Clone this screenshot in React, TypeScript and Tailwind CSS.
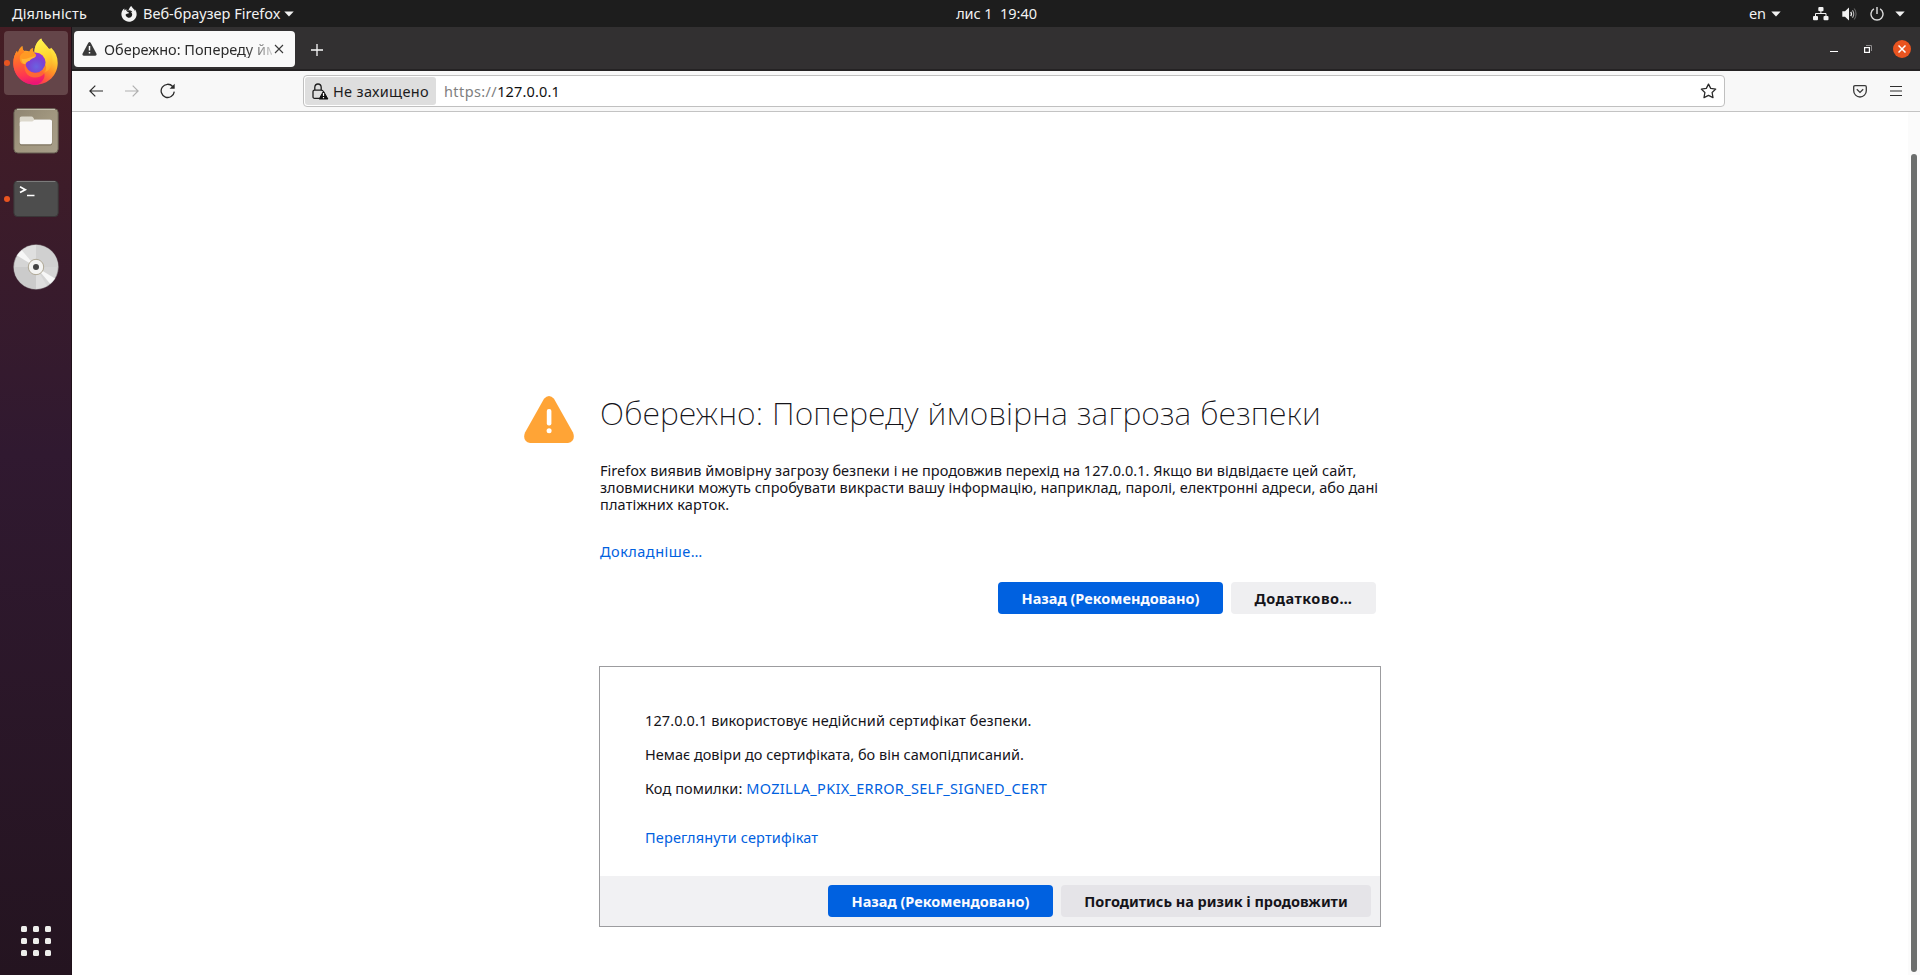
import React from "react";
import { FaFirefoxBrowser } from "react-icons/fa";

function FirefoxLogo() {
  return (
    <svg width="46" height="47" viewBox="0 0 46 47" className="block">
      <defs>
        <linearGradient id="ffBody" x1="0.85" y1="0.1" x2="0.3" y2="1">
          <stop offset="0" stopColor="#fff04a" />
          <stop offset="0.25" stopColor="#ffd032" />
          <stop offset="0.5" stopColor="#ff9226" />
          <stop offset="0.75" stopColor="#ff4a45" />
          <stop offset="1" stopColor="#e8157a" />
        </linearGradient>
        <linearGradient id="ffLeft" x1="0.3" y1="0" x2="0.45" y2="1">
          <stop offset="0" stopColor="#ff9a1c" />
          <stop offset="0.4" stopColor="#ff6530" />
          <stop offset="0.75" stopColor="#ff3750" />
          <stop offset="1" stopColor="#ea1478" />
        </linearGradient>
        <linearGradient id="ffFlame" x1="0.4" y1="0" x2="0.6" y2="1">
          <stop offset="0" stopColor="#fff44f" />
          <stop offset="0.55" stopColor="#ffd431" />
          <stop offset="1" stopColor="#ffa22a" />
        </linearGradient>
        <radialGradient id="ffGlobe" cx="0.55" cy="0.7" r="0.75">
          <stop offset="0" stopColor="#6a63e0" />
          <stop offset="0.5" stopColor="#7a44d4" />
          <stop offset="1" stopColor="#a72bd0" />
        </radialGradient>
      </defs>
      <path d="M28.2 .6C29 4 33 6.500 35.500 10.500C37 11 37.800 10.500 38.200 9.800C42.500 13.800 44.700 19 44.700 25C44.700 37 35 46.800 22.500 46.800C10 46.800 .3 37.500 .3 25C.3 20.500 1.600 16.500 4 12.800C4.300 14.200 4.600 14.700 5 15C5.600 12 7 9.800 9.300 8C9.400 10.300 9.900 12 11 13C13 12.600 15 12.900 16.400 13.700C17 12 18 10.800 19.800 10C19.400 12.300 20 14 21.500 15.200C21.300 9 23.500 4 28.200 .6Z" fill="url(#ffBody)" />
      <path d="M.3 25C.3 20.500 1.600 16.500 4 12.800C4.300 14.200 4.600 14.700 5 15C5.600 12 7 9.800 9.300 8C9.400 10.300 9.900 12 11 13L13 24C12 34 22 37 30 33C34 38 30 44 24 46.800C10 47 .3 37.500 .3 25Z" fill="url(#ffLeft)" />
      <path d="M28.200 .6C29 4 33 6.500 35.500 10.500C39 15 40.500 21 38.500 27C37 31.500 34 34 30.500 34.500C33.500 30 33.500 23 30.500 18.500C28.500 15.500 24.500 14.500 21.500 15.200C21.300 9 23.500 4 28.200 .6Z" fill="url(#ffFlame)" />
      <circle cx="22.300" cy="24.600" r="10.200" fill="url(#ffGlobe)" />
      <path d="M7 18C8.500 14.500 13 12.800 16.400 13.700C17 12 18 10.800 19.800 10C19.400 12.300 20 14 22.500 16C23.600 17 23.300 18.800 21 19.600C18 20.500 17.500 21.500 16.500 22.700C14 23.200 13 24.500 12.600 26.200C8 27 6 22 7 18Z" fill="#ff9a24" />
      <path d="M8.500 20.500C12 22.500 17 18.500 22.800 18.200C22.300 20 18.200 20 16.500 22.700C14 23.200 13 24.500 12.600 26.200C10 26 8.500 23.500 8.500 20.500Z" fill="#ffb636" />
      <path d="M12.300 24C12.300 32 18 35.500 24 35C29 34.500 32 31 32.500 27C35 33 30 39.500 22 39.500C14 39.500 9.500 32 12.300 24Z" fill="#ff7a2a" opacity=".75" />
    </svg>
  );
}

function FilesIcon() {
  return (
    <svg width="46" height="46" viewBox="0 0 46 46" className="block">
      <defs>
        <linearGradient id="filesBg" x1="0" y1="0" x2="1" y2="1">
          <stop offset="0" stopColor="#8e8471" />
          <stop offset="0.5" stopColor="#a1977f" />
          <stop offset="1" stopColor="#a69d89" />
        </linearGradient>
      </defs>
      <rect x=".9" y=".7" width="44.300" height="44.300" rx="4" fill="url(#filesBg)" stroke="#645d50" />
      <path d="M4 1.400H42" stroke="#c9c3b4" />
      <path d="M6.700 14C6.700 12.500 7.300 11.600 8.700 11.600H37C38.500 11.600 39.200 12.500 39.200 14V35.500C39.200 37 38 37.600 36.700 37.600H8.700C7.300 37.600 6.700 37 6.700 35.500Z" fill="#7c735f" />
      <path d="M6.700 18V10.600C6.700 9.200 7.300 8.400 8.700 8.400H18.500C20 8.400 20.500 10 21.500 11.500V18Z" fill="#dcd8cc" />
      <path d="M6.700 15.500C6.700 14.200 7.200 13.500 8.500 13.500H19C20.300 13.500 20.800 11.400 22.300 11.400H36.800C38.400 11.400 39 12.200 39 13.600V34C39 35.600 38.200 36.300 36.800 36.300H8.900C7.400 36.300 6.700 35.500 6.700 34Z" fill="#faf9f8" />
    </svg>
  );
}

function TerminalIcon() {
  return (
    <svg width="46" height="38" viewBox="0 0 46 38" className="block">
      <rect x=".9" y="1" width="44.300" height="35.500" rx="3.500" fill="#4d4d4d" stroke="#3a3738" />
      <path d="M3.500 1.500H42.500" stroke="#8a8a8a" strokeWidth=".8" />
      <path d="M7 6.800L12.300 9.700L7 12.600" fill="none" stroke="#fff" strokeWidth="1.700" />
      <path d="M14 15.500H21.500" stroke="#fff" strokeWidth="1.500" />
    </svg>
  );
}

function DiscIcon() {
  return (
    <svg width="46" height="46" viewBox="0 0 46 46" className="block">
      <circle cx="23" cy="23" r="22.300" fill="#d5d5d5" stroke="#8d898b" strokeWidth=".6" />
      <path d="M23 23L23 1A22 22 0 0 0 8 7Z" fill="#dfdfdf" />
      <path d="M23 23L45 23A22 22 0 0 0 23 1Z" fill="#d0d0d0" />
      <path d="M23 23L1 23A22 22 0 0 0 23 45Z" fill="#cbcbcb" />
      <path d="M23 23L23 45A22 22 0 0 0 34 42Z" fill="#dedede" />
      <path d="M23 23L4 11.600A22 22 0 0 1 8.800 6.300Z" fill="#f7f7f7" />
      <path d="M23 23L42 34.400A22 22 0 0 1 37.200 39.700Z" fill="#f7f7f7" />
      <circle cx="23" cy="23" r="7.700" fill="#f4f4f2" stroke="#a8a08c" strokeWidth=".9" />
      <circle cx="23" cy="23" r="3" fill="#444" />
    </svg>
  );
}

function DockItem({ children, active = false, running = false }: { children: React.ReactNode; active?: boolean; running?: boolean }) {
  return (
    <div className={`relative ml-1 flex h-16 w-16 items-center justify-center rounded ${active ? "bg-[#644549]" : ""}`}>
      {running && <span className="absolute top-[29px] left-0 h-[6px] w-[6px] rounded-full bg-[#e95420]" />}
      {children}
    </div>
  );
}

function Caret({ className = "" }: { className?: string }) {
  return (
    <svg width="10" height="6" viewBox="0 0 10 6" className={`block ${className}`}>
      <path d="M.3.400H9.700L5 5.500Z" fill="#f2f2f2" />
    </svg>
  );
}

function TopBar() {
  return (
    <div className="flex h-[27px] items-center bg-[#1d1d1d] text-[#f2f2f2]">
      <div className="flex flex-1 items-center pl-3">
        <span className="w-[109px] tracking-[0.15px]">Діяльність</span>
        <FaFirefoxBrowser className="mr-[6px] h-4 w-4 text-[#f2f2f2]" />
        <span>Веб-браузер Firefox</span>
        <Caret className="ml-1" />
      </div>
      <div className="ml-[76px] tracking-[-0.05px] whitespace-pre">лис 1  19:40</div>
      <div className="flex flex-1 items-center justify-end pr-[15px]">
        <span>en</span>
        <Caret className="ml-[5px]" />
        <svg width="16" height="14" viewBox="0 0 16 14" className="ml-[32px] block">
          <g fill="#f2f2f2">
            <rect x="5.300" y="0" width="5.200" height="4.200" rx="1" />
            <rect x="0" y="9" width="5" height="4.200" rx="1" />
            <rect x="10.500" y="9" width="5" height="4.200" rx="1" />
          </g>
          <path d="M7.900 4V6.500M2.500 9.500V6.500H13V9.500" fill="none" stroke="#f2f2f2" />
        </svg>
        <svg width="16" height="14" viewBox="0 0 16 14" className="ml-[13px] block">
          <path d="M.3 4.300H3L7 .6V13.400L3 9.800H.3Z" fill="#f2f2f2" />
          <path d="M8.800 4.800Q10.300 7 8.800 9.200" fill="none" stroke="#f2f2f2" strokeWidth="1.400" />
          <path d="M10.500 3.200Q13 7 10.500 10.800" fill="none" stroke="#b5b5b5" strokeWidth="1.100" />
          <path d="M12.300 1.500Q15.800 7 12.300 12.500" fill="none" stroke="#6f6f6f" />
        </svg>
        <svg width="14" height="14" viewBox="0 0 14 14" className="ml-3 block">
          <path d="M3.900 1.900A6 6 0 1 0 10.100 1.900" fill="none" stroke="#dcdcdc" strokeWidth="1.400" />
          <path d="M7 0V7" stroke="#f2f2f2" strokeWidth="1.300" />
        </svg>
        <Caret className="ml-[11px]" />
      </div>
    </div>
  );
}

function Sidebar() {
  return (
    <aside className="flex w-[72px] shrink-0 flex-col border-r border-[#1f1119] bg-linear-to-b from-[#451d24] from-0% via-[#301930] via-45% to-[#241420] to-100% pt-1">
      <div className="flex flex-col gap-1">
        <DockItem active running><div className="mt-[-3px]"><FirefoxLogo /></div></DockItem>
        <DockItem><FilesIcon /></DockItem>
        <DockItem running><TerminalIcon /></DockItem>
        <DockItem><DiscIcon /></DockItem>
      </div>
      <div className="mt-auto mb-[19px] ml-[21px] grid w-[30px] grid-cols-3 gap-[6px]">
        {Array.from({ length: 9 }, (_, i) => (
          <span key={i} className="h-[6px] w-[6px] rounded-[1.5px] bg-[#eeeeec]" />
        ))}
      </div>
    </aside>
  );
}

function TabStrip() {
  return (
    <div className="flex h-11 items-start border-b-2 border-[#242223] bg-[#323031] pt-1 pl-[2px]">
      <div className="flex h-9 w-[221px] items-center rounded bg-[#f9f9f9] pl-2 text-[#2b2b2b]">
        <svg width="15" height="14" viewBox="0 0 15 14" className="block shrink-0">
          <path d="M6.200 .9Q7.500 -.7 8.800 .9L14.500 11.700Q15 13.500 13.300 13.700H1.700Q0 13.500 .5 11.700Z" fill="#3a3a3a" />
          <path d="M7.500 4V8.500M7.500 10V11.600" stroke="#fff" strokeWidth="1.500" />
        </svg>
        <div className="ml-[7px] w-[168px] overflow-hidden whitespace-nowrap mask-[linear-gradient(to_right,black_142px,transparent_174px)]">
          Обережно: Попереду ймовірна
        </div>
        <svg width="10" height="10" viewBox="0 0 10 10" className="ml-[2px] block shrink-0">
          <path d="M1 1L9 9M9 1L1 9" stroke="#3a3a3a" strokeWidth="1.100" />
        </svg>
      </div>
      <svg width="12" height="12" viewBox="0 0 12 12" className="mt-[13px] ml-[16px] block">
        <path d="M6 0V12M0 6H12" stroke="#f9f9f9" strokeWidth="1.300" />
      </svg>
      <div className="ml-auto flex items-start pr-[9px]">
        <svg width="8" height="12" viewBox="0 0 8 12" className="mt-3 block">
          <path d="M0 8.500H8" stroke="#fff" />
        </svg>
        <svg width="9" height="9" viewBox="0 0 9 9" className="mt-[14px] ml-[26px] block">
          <path d="M2 .5H7.500V6" fill="none" stroke="#8e8c8d" />
          <rect x=".6" y="2.600" width="4.800" height="4.800" fill="none" stroke="#fff" strokeWidth="1.200" />
        </svg>
        <div className="mt-[9px] ml-[20px] flex h-[18px] w-[18px] items-center justify-center rounded-full bg-[#e95420]">
          <svg width="8" height="8" viewBox="0 0 8 8" className="block">
            <path d="M.5 .5L7.500 7.500M7.500 .5L.5 7.500" stroke="#fff" strokeWidth="1.500" />
          </svg>
        </div>
      </div>
    </div>
  );
}

function Toolbar() {
  return (
    <div className="flex h-[41px] items-center border-b border-[#c3c3c3] bg-[#f8f8f8] pl-[17px]">
      <svg width="14" height="12" viewBox="0 0 14 12" className="block">
        <path d="M14 6H1M6.300 .6L.9 6L6.300 11.400" fill="none" stroke="#2b2b2b" strokeWidth="1.200" />
      </svg>
      <svg width="14" height="12" viewBox="0 0 14 12" className="ml-[22px] block">
        <path d="M0 6H13M7.700 .6L13.100 6L7.700 11.400" fill="none" stroke="#b0b0b0" strokeWidth="1.200" />
      </svg>
      <svg width="16" height="16" viewBox="0 0 16 16" className="ml-[21px] block">
        <path d="M14.300 8.700A6.600 6.600 0 1 1 12.700 3.500" fill="none" stroke="#2b2b2b" strokeWidth="1.300" />
        <path d="M14.700 .8V5.700H9.600Z" fill="#2b2b2b" />
      </svg>
      <div className="ml-[127px] flex h-8 w-[1422px] items-center rounded border border-[#c0c0c0] bg-white pl-px">
        <div className="flex h-7 w-[131px] items-center rounded-[3px] bg-[#dedede] pl-[7px] text-[#1c1c1c]">
          <svg width="17" height="17" viewBox="0 0 17 17" className="block">
            <path d="M7 15.300H2.600Q1 15.300 1 13.700V8.600Q1 7.200 2.600 7.200H9.400Q10.800 7.200 11 8.200M2.800 7V4.300Q3 1 6 1Q9 1 9.200 4.300V7" fill="none" stroke="#1c1c1c" strokeWidth="1.300" />
            <path d="M11.500 8.200L15.900 16H7.100Z" fill="#111" stroke="#111" strokeLinejoin="round" />
            <path d="M11.500 10V13M11.500 14V15.200" stroke="#fff" strokeWidth="1.200" />
          </svg>
          <span className="ml-[4px] tracking-[0.33px]">Не захищено</span>
        </div>
        <span className="ml-2 tracking-[0.4px] text-[#808080]">https://</span>
        <span className="tracking-[0.15px] text-[#101010]">127.0.0.1</span>
        <svg width="17" height="16" viewBox="0 0 17 16" className="mr-[7px] ml-auto block">
          <path d="M8.500 1.100L10.700 5.400L15.700 6.100L12.100 9.500L13 14.600L8.500 12.300L4 14.600L4.900 9.500L1.300 6.100L6.300 5.400Z" fill="none" stroke="#2b2b2b" strokeWidth="1.300" strokeLinejoin="round" />
        </svg>
      </div>
      <svg width="14" height="13" viewBox="0 0 14 13" className="ml-[128px] block">
        <path d="M2 .7H12Q13.300 .7 13.300 2V5.700A6.300 6.300 0 0 1 .7 5.700V2Q.7 .7 2 .7Z" fill="none" stroke="#3a3a3a" strokeWidth="1.300" />
        <path d="M3.800 4.300L7 7.400L10.200 4.300" fill="none" stroke="#3a3a3a" strokeWidth="1.300" />
      </svg>
      <svg width="12" height="12" viewBox="0 0 12 12" className="ml-[23px] block">
        <path d="M0 1.500H12M0 6H12M0 10.500H12" stroke="#2f2f2f" strokeWidth="1.150" />
      </svg>
    </div>
  );
}

const btn = "flex h-8 items-center justify-center rounded text-center font-bold whitespace-nowrap";

function ErrorPage() {
  return (
    <main className="relative flex-1 bg-white text-[#15141a]">
      <div className="ml-[452px] flex pt-[284px]">
        <svg width="50" height="47" viewBox="0 0 50 47" className="block shrink-0">
          <path d="M20 2.800Q25 -2.800 30 2.800L49 36.500Q52 45 44 47H6Q-2 45 1 36.500Z" fill="#ffa436" />
          <rect x="22.800" y="13" width="4.600" height="16.500" rx="2" fill="#fff" />
          <circle cx="25.100" cy="34.700" r="2.500" fill="#fff" />
        </svg>
        <div className="ml-[26px]">
          <h1 className="-mt-[5px] h-[44px] text-[32px] leading-[44px] font-extralight tracking-[0.34px] whitespace-nowrap">
            Обережно: Попереду ймовірна загроза безпеки
          </h1>
          <p className="mt-[27px] whitespace-nowrap">
            <span className="tracking-[0.035px]">Firefox виявив ймовірну загрозу безпеки і не продовжив перехід на 127.0.0.1. Якщо ви відвідаєте цей сайт,</span>
            <br />
            <span className="tracking-[0.02px]">зловмисники можуть спробувати викрасти вашу інформацію, наприклад, паролі, електронні адреси, або дані</span>
            <br />
            <span className="tracking-[0.15px]">платіжних карток.</span>
          </p>
          <a className="mt-[30px] block tracking-[0.48px] text-[#0061e0]">Докладніше…</a>
          <div className="mt-[22px] flex w-[776px] justify-end gap-2">
            <button className={`${btn} w-[225px] bg-[#0061e0] text-[#fbfbfe]`}>Назад (Рекомендовано)</button>
            <button className={`${btn} w-[145px] bg-[#efeff1] tracking-[0.5px]`}>Додатково…</button>
          </div>
          <section className="mt-[52px] -ml-px h-[261px] w-[782px] border border-[#9c9c9f]">
            <div className="flex h-[209px] flex-col pt-[45px] pl-[45px]">
              <p className="tracking-[0.1px]">127.0.0.1 використовує недійсний сертифікат безпеки.</p>
              <p className="mt-[17px] tracking-[0.01px]">Немає довіри до сертифіката, бо він самопідписаний.</p>
              <p className="mt-[17px]">
                <span className="tracking-[0.08px]">Код помилки: </span>
                <a className="tracking-[0.3px] text-[#0061e0]">MOZILLA_PKIX_ERROR_SELF_SIGNED_CERT</a>
              </p>
              <a className="mt-8 tracking-[0.15px] text-[#0061e0]">Переглянути сертифікат</a>
            </div>
            <div className="flex h-[50px] items-center justify-end gap-2 bg-[#f1f1f3] pr-[9px]">
              <button className={`${btn} w-[225px] bg-[#0061e0] text-[#fbfbfe]`}>Назад (Рекомендовано)</button>
              <button className={`${btn} w-[310px] bg-[#e5e4e8] tracking-[-0.03px]`}>Погодитись на ризик і продовжити</button>
            </div>
          </section>
        </div>
      </div>
      <div className="absolute top-0 right-0 h-full w-3 bg-[#fbfbfb] pt-[42px] pl-[3px]">
        <div className="h-[818px] w-[6px] rounded-full bg-[#6c6e6d]" />
      </div>
    </main>
  );
}

export default function App() {
  return (
    <div className="flex h-[975px] w-[1920px] flex-col overflow-hidden font-['Noto_Sans',sans-serif] text-[14.5px] leading-[17px]">
      <TopBar />
      <div className="flex min-h-0 flex-1">
        <Sidebar />
        <div className="flex min-w-0 flex-1 flex-col">
          <TabStrip />
          <Toolbar />
          <ErrorPage />
        </div>
      </div>
    </div>
  );
}
